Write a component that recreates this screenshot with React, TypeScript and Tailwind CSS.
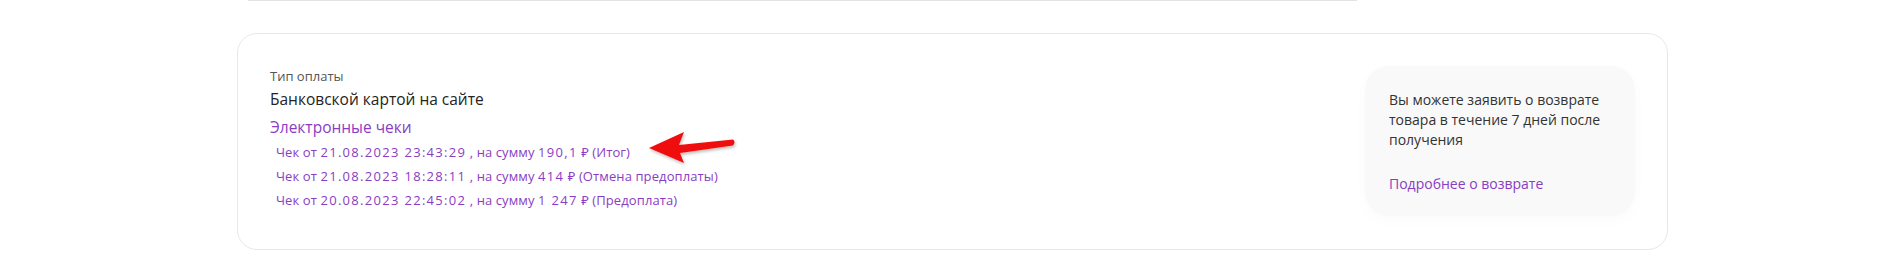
import React from "react";

function Receipt({ text }: { text: string }) {
  const parts = text.split(/(\d[\d.,: ]*\d)/);
  return (
    <div className="text-[13px] leading-[24px] text-[#8a3cc4] whitespace-nowrap">
      {parts.map((p, i) =>
        i % 2 === 1 ? (
          <span key={i} className="tracking-[1.3px]">{p}</span>
        ) : (
          <span key={i} className="tracking-[0.1px]">{p}</span>
        )
      )}
    </div>
  );
}

export default function App() {
  const receipts = [
    "Чек от 21.08.2023 23:43:29 , на сумму 190,1 ₽ (Итог)",
    "Чек от 21.08.2023 18:28:11 , на сумму 414 ₽ (Отмена предоплаты)",
    "Чек от 20.08.2023 22:45:02 , на сумму 1 247 ₽ (Предоплата)",
  ];
  return (
    <div className="relative w-[1902px] h-[263px] bg-white overflow-hidden" style={{ fontFamily: "'Open Sans', 'Noto Sans', sans-serif" }}>
      <div className="ml-[248px] w-[1109px] h-px bg-[#e3e3e3] shadow-[0_6px_10px_rgba(0,0,0,0.025)]" />
      <div className="ml-[237px] mt-[32px] w-[1431px] h-[217px] border border-[#e8e8e8] rounded-[20px] flex justify-between p-[32px]">
        <div className="flex flex-col">
          <div className="text-[13px] leading-[20px] text-[#555]">Тип оплаты</div>
          <div className="text-[15.5px] leading-[22px] mt-[2px] text-[#242424]">Банковской картой на сайте</div>
          <div className="text-[15.5px] leading-[22px] mt-[6px] text-[#8a3cc4]">Электронные чеки</div>
          <div className="flex flex-col ml-[6px] mt-[2px]">
            {receipts.map((r) => (
              <Receipt key={r} text={r} />
            ))}
          </div>
        </div>
        <div className="w-[270px] h-[150px] bg-[#f9f9f9] rounded-[24px] px-[24px] pt-[24px] shadow-[0_4px_16px_rgba(0,0,0,0.02)]">
          <div className="text-[14px] leading-[20px] text-[#333]">Вы можете заявить о возврате товара в течение 7 дней после получения</div>
          <div className="text-[14px] leading-[20px] mt-[24px] text-[#8a3cc4]">Подробнее о возврате</div>
        </div>
      </div>
      <svg className="absolute left-[640px] top-[126px]" width="110" height="46" viewBox="0 0 110 46">
        <defs>
          <filter id="sh" x="-20%" y="-20%" width="140%" height="160%">
            <feDropShadow dx="1" dy="2" stdDeviation="1.5" floodColor="#000" floodOpacity="0.25" />
          </filter>
        </defs>
        <g filter="url(#sh)">
          <path d="M9 22 L44 6 L39 19 L93 13.5 Q96 16 93 19.5 L40 27 L44 37 Z" fill="#f01010" />
        </g>
      </svg>
    </div>
  );
}
